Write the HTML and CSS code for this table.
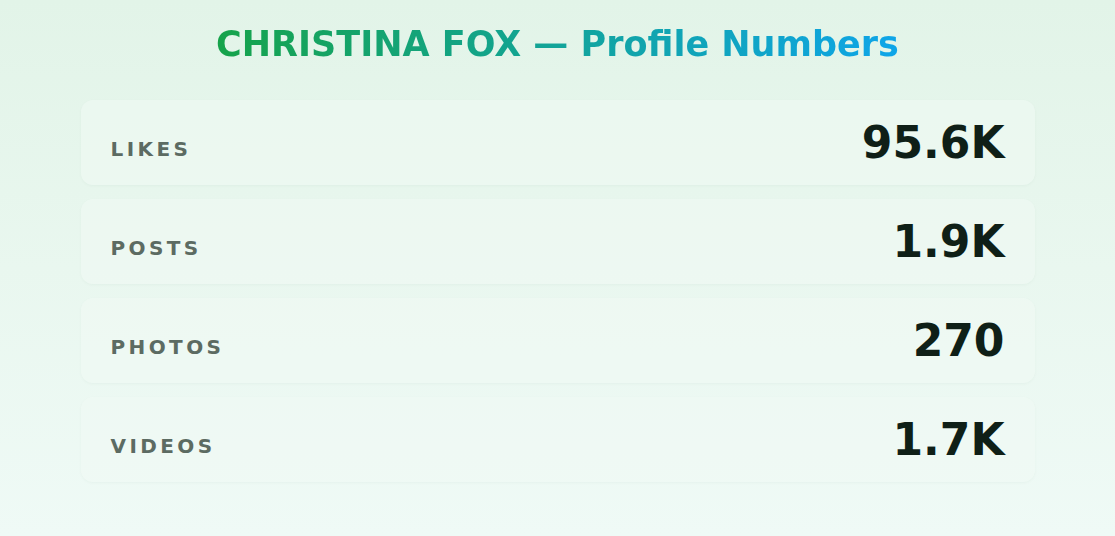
FILE: index.html
```html
<!DOCTYPE html>
<html lang="en">
<head>
  <meta charset="UTF-8" />
  <meta name="viewport" content="width=device-width, initial-scale=1.0" />
  <title>Christina Fox | Profile Numbers</title>
  <link rel="stylesheet" href="styles.css">
</head>
<body>
  <main class="page">
    <h1 class="title">CHRISTINA FOX — Profile Numbers</h1>

    <section class="stats">
      <div class="stat">
        <span class="stat-label">Likes</span>
        <span class="stat-value">95.6K</span>
      </div>
      <div class="stat">
        <span class="stat-label">Posts</span>
        <span class="stat-value">1.9K</span>
      </div>
      <div class="stat">
        <span class="stat-label">Photos</span>
        <span class="stat-value">270</span>
      </div>
      <div class="stat">
        <span class="stat-label">Videos</span>
        <span class="stat-value">1.7K</span>
      </div>
    </section>
  </main>
</body>
</html>
```

FILE: styles.css
```css
html {
  height: 100%;
}
body {
  margin: 0;
  min-height: 100%;
  font-family: "DejaVu Sans", Verdana, sans-serif;
  background: linear-gradient(180deg, #e2f4e8 0%, #e9f7ef 50%, #effaf6 100%);
  color: #0f1f17;
}
.page {
  max-width: 954px;
  margin: 0 auto;
  padding: 24px 0 40px;
}
.title {
  width: fit-content;
  margin: 0 auto 35px;
  font-size: 35px;
  font-weight: 700;
  line-height: 41px;
  background: linear-gradient(90deg, #16a34a 0%, #0ea5e9 100%);
  -webkit-background-clip: text;
  background-clip: text;
  color: transparent;
}
.stats {
  display: flex;
  flex-direction: column;
  gap: 14px;
}
.stat {
  height: 85px;
  box-sizing: border-box;
  padding: 0 30px;
  display: flex;
  justify-content: space-between;
  align-items: center;
  background: rgba(240, 250, 244, 0.55);
  border-radius: 12px;
  box-shadow: 0 1px 3px rgba(20, 80, 50, 0.04);
}
.stat-label {
  padding-top: 13px;
  font-size: 20px;
  font-weight: 700;
  letter-spacing: 0.17em;
  text-transform: uppercase;
  color: #5c6b62;
}
.stat-value {
  font-size: 44px;
  font-weight: 700;
  line-height: 1;
  color: #0f1f17;
}
```
